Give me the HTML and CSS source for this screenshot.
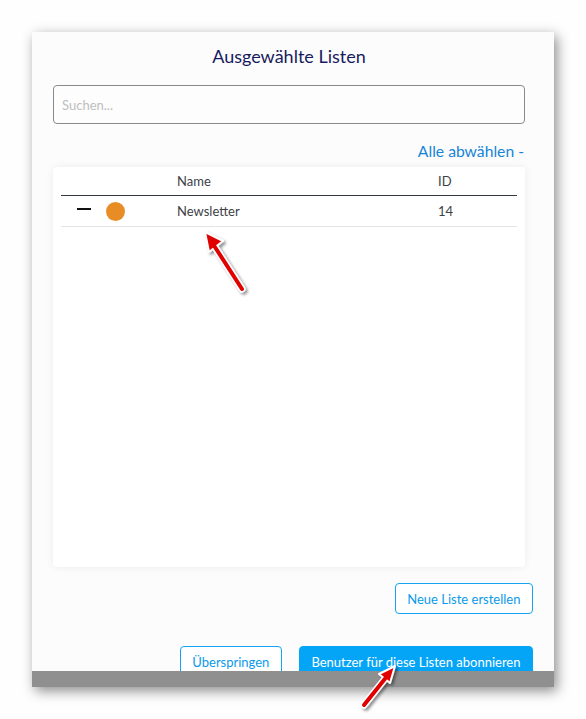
FILE: index.html
```html
<!DOCTYPE html>
<html lang="de">
<head>
<meta charset="utf-8">
<title>Ausgewählte Listen</title>
<link rel="stylesheet" href="styles.css">
</head>
<body>
<div class="panel">
  <div class="panel-body">
    <h1 class="title">Ausgewählte Listen</h1>
    <input class="search" type="text" placeholder="Suchen...">
    <div class="deselect-row"><a class="deselect" href="#">Alle abwählen -</a></div>
    <div class="card">
      <div class="table">
        <div class="thead">
          <div class="cell"></div>
          <div class="cell">Name</div>
          <div class="cell">ID</div>
        </div>
        <div class="trow">
          <div class="cell icons"><span class="minus"></span><span class="dot"></span></div>
          <div class="cell">Newsletter</div>
          <div class="cell">14</div>
        </div>
      </div>
    </div>
    <div class="actions">
      <button class="btn btn-outline">Neue Liste erstellen</button>
    </div>
    <div class="actions footer">
      <button class="btn btn-outline">Überspringen</button>
      <button class="btn btn-primary">Benutzer für diese Listen abonnieren</button>
    </div>
  </div>
  <div class="panel-bar"></div>
</div>

<svg class="annotations" width="586" height="719" viewBox="0 0 586 719">
  <defs>
    <filter id="sh" x="-50%" y="-50%" width="200%" height="200%">
      <feDropShadow dx="2" dy="2" stdDeviation="1.6" flood-color="#000" flood-opacity="0.45"/>
    </filter>
  </defs>
  <g filter="url(#sh)">
    <line x1="242" y1="289" x2="213" y2="244" stroke="#fff" stroke-width="7" stroke-linecap="round"/>
    <polygon points="205,232 223,241 209,252" fill="#e00000" stroke="#fff" stroke-width="2" stroke-linejoin="round"/>
    <line x1="242" y1="289" x2="213" y2="244" stroke="#e00000" stroke-width="4" stroke-linecap="round"/>
  </g>
  <g filter="url(#sh)">
    <line x1="364" y1="705" x2="388" y2="675" stroke="#fff" stroke-width="7" stroke-linecap="round"/>
    <polygon points="395,666 390,683 379,674" fill="#e00000" stroke="#fff" stroke-width="2" stroke-linejoin="round"/>
    <line x1="364" y1="705" x2="388" y2="675" stroke="#e00000" stroke-width="4" stroke-linecap="round"/>
  </g>
</svg>
</body>
</html>
```

FILE: styles.css
```css
html, body {
  margin: 0;
  padding: 0;
  background: #fefefe;
  font-family: Lato, "Open Sans", sans-serif;
}

body {
  position: relative;
  width: 586px;
  height: 719px;
  overflow: hidden;
}

.panel {
  margin: 32px 0 0 32px;
  width: 522px;
  background: #fcfcfc;
  box-shadow: 3px 4px 12px rgba(0, 0, 0, 0.45);
  display: flex;
  flex-direction: column;
}

.panel-body {
  height: 639px;
  overflow: hidden;
  padding: 0 29px 0 21px;
  display: flex;
  flex-direction: column;
}

.panel-body > * {
  flex-shrink: 0;
}

.panel-bar {
  height: 16px;
  background: #8f8f8f;
}

.title {
  margin: 12px 0 0;
  font-size: 18px;
  line-height: 24px;
  font-weight: 400;
  color: #171b5e;
  text-align: center;
}

.search {
  margin: 17px 0 0;
  box-sizing: border-box;
  height: 39px;
  width: 100%;
  border: 1px solid #8a8a8a;
  border-radius: 4px;
  background: #fdfdfd;
  padding: 0 8px;
  font-family: Lato, sans-serif;
  font-size: 13px;
  color: #333;
  outline: none;
}

.search::placeholder {
  color: #bdbdbd;
}

.deselect-row {
  margin-top: 17px;
  display: flex;
  justify-content: flex-end;
  line-height: 20px;
}

.deselect {
  font-size: 15.7px;
  color: #1585d8;
  text-decoration: none;
  margin-right: 1px;
}

.card {
  margin-top: 6px;
  height: 400px;
  box-sizing: border-box;
  background: #ffffff;
  border-radius: 4px;
  box-shadow: 0 0 8px rgba(0, 0, 0, 0.07);
  padding: 4px 8px 0;
}

.thead, .trow {
  display: grid;
  grid-template-columns: 116px 261px 1fr;
  font-size: 13px;
  line-height: 20px;
  color: #3d4146;
}

.thead {
  padding-bottom: 4px;
  border-bottom: 1px solid #343a40;
}

.trow {
  padding: 5px 0;
  border-bottom: 1px solid #e4e4e4;
  align-items: center;
}

.icons {
  display: flex;
  align-items: center;
  padding-left: 16px;
  gap: 15px;
}

.minus {
  display: block;
  width: 14px;
  height: 2px;
  background: #111;
  margin-top: -4px;
}

.dot {
  display: block;
  width: 19px;
  height: 19px;
  border-radius: 50%;
  background: #e88c25;
}

.actions {
  display: flex;
  justify-content: flex-end;
  margin-right: -8px;
  margin-top: 16px;
  gap: 17px;
}

.footer {
  margin-top: 32px;
}

.btn {
  font-family: Lato, sans-serif;
  font-size: 13px;
  height: 31px;
  padding: 0 11.5px;
  border-radius: 4px;
  cursor: pointer;
  flex: none;
}

.btn-outline {
  background: #ffffff;
  border: 1px solid #16a3f5;
  color: #0a9ae9;
}

.btn-primary {
  background: #04a4f7;
  border: 1px solid #04a4f7;
  color: #ffffff;
}

.annotations {
  position: absolute;
  left: 0;
  top: 0;
  pointer-events: none;
}
```
